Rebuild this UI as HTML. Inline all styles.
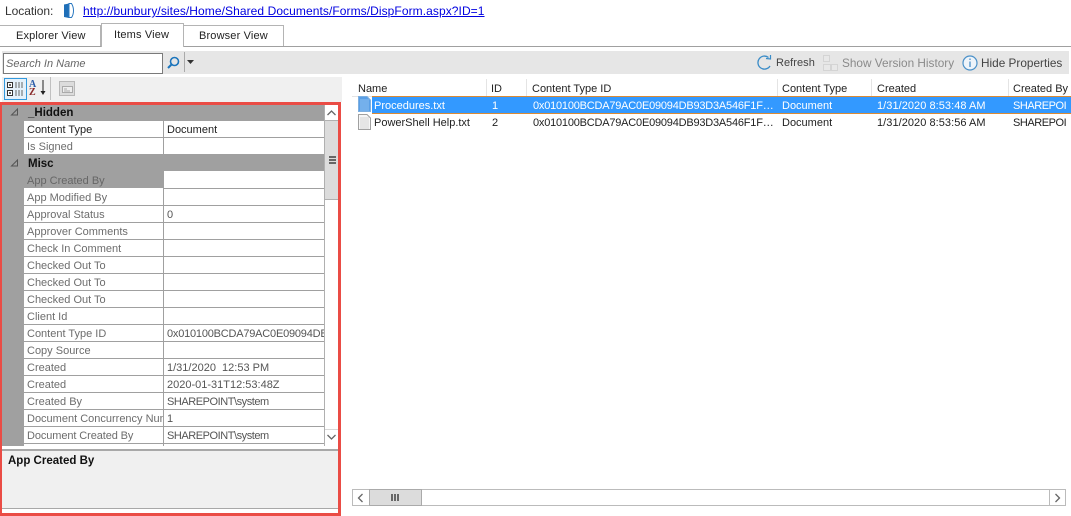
<!DOCTYPE html>
<html><head><meta charset="utf-8"><style>
html,body{margin:0;padding:0;background:#fff}
#p{position:relative;width:1071px;height:516px;overflow:hidden;background:#fff;font:11px/18px "Liberation Sans",sans-serif;color:#1a1a1a}
#p div{position:absolute;white-space:nowrap}
.n{left:27px;color:#6d6d6d;width:136px;overflow:hidden}
.v{left:167px;color:#555;width:157px;overflow:hidden}
.l{left:24px;width:300px;height:1px;background:#a0a0a0}
.h{left:352px;color:#222}
.c{color:#222}
.s{color:#fff}
.id{letter-spacing:-.21px}
.sp{letter-spacing:-.45px}
.tab{color:#222;letter-spacing:.15px}
</style></head><body><div id="p">
<div style="left:5px;top:2px;color:#333;font-size:12px;letter-spacing:-.05px">Location:</div>
<svg style="position:absolute;left:63px;top:2px" width="12" height="17"><path d="M1 2.500L6 1.500V16L1 15Z" fill="#1f6fb8"/><path d="M6 1.500H8.500C10 4 10.500 6 10.500 8.500C10.500 11 10 13.500 8.500 15.500H6Z" fill="#fff" stroke="#2a78c0"/></svg>
<div style="left:83px;top:2px;color:#0000e0;text-decoration:underline;font-size:12px;letter-spacing:.075px">http://bunbury/sites/Home/Shared Documents/Forms/DispForm.aspx?ID=1</div>

<div style="left:0;top:46px;width:1071px;height:1px;background:#a0a0a0"></div>
<div style="left:0;top:25px;width:101px;height:21px;border:1px solid #b4b4b4;border-left:0;border-bottom:0;box-sizing:border-box"></div>
<div class="tab" style="left:16px;top:27px">Explorer View</div>
<div style="left:101px;top:23px;width:83px;height:24px;border:1px solid #b4b4b4;border-bottom:0;box-sizing:border-box;background:#fff"></div>
<div class="tab" style="left:114px;top:26px">Items View</div>
<div style="left:184px;top:25px;width:100px;height:21px;border:1px solid #b4b4b4;border-left:0;border-bottom:0;box-sizing:border-box"></div>
<div class="tab" style="left:199px;top:27px">Browser View</div>

<div style="left:2px;top:51px;width:1067px;height:23px;background:#e6e6e6"></div>
<div style="left:3px;top:53px;width:160px;height:21px;border:1px solid #7a7a7a;box-sizing:border-box;background:#fff"></div>
<div style="left:6px;top:55px;color:#666;font-style:italic">Search In Name</div>
<svg style="position:absolute;left:166px;top:56px" width="16" height="14"><circle cx="8.500" cy="5.500" r="4" fill="none" stroke="#1c75bc" stroke-width="1.600"/><path d="M5.500 8.500L2 12" stroke="#1c75bc" stroke-width="2"/></svg>
<div style="left:184px;top:52px;width:1px;height:20px;background:#aaa"></div>
<svg style="position:absolute;left:186px;top:60px" width="9" height="5"><path d="M1 0H8L4.500 4Z" fill="#333"/></svg>

<svg style="position:absolute;left:756px;top:54px" width="17" height="17"><path d="M14 12A6.500 6.500 0 1 1 12.500 3.500" fill="none" stroke="#3a8cc8" stroke-width="1.300"/><path d="M10 4.500L14.500 5L14.500 1" fill="none" stroke="#3a8cc8" stroke-width="1.200"/></svg>
<div style="left:776px;top:54px;color:#444;font-size:11px;letter-spacing:.05px">Refresh</div>
<svg style="position:absolute;left:822px;top:54px" width="18" height="18"><g fill="#e8e8e8" stroke="#d4d4d4"><rect x="1.500" y="1.500" width="6" height="6"/><rect x="1.500" y="10.500" width="7" height="6"/><rect x="9.500" y="10.500" width="6" height="6"/></g></svg>
<div style="left:842px;top:54px;color:#8a8a8a;font-size:11.800px">Show Version History</div>
<svg style="position:absolute;left:962px;top:55px" width="16" height="16"><circle cx="8" cy="8" r="7" fill="#eef4fa" stroke="#4a90c8" stroke-width="1.200"/><path d="M8 6.500V12M8 3.500V5" stroke="#4a90c8" stroke-width="1.300"/></svg>
<div style="left:981px;top:54px;color:#444;font-size:11.800px">Hide Properties</div>

<div style="left:2px;top:77px;width:340px;height:25px;background:#f0f0f0"></div>
<div style="left:4px;top:78px;width:23px;height:22px;border:1px solid #3399dd;box-sizing:border-box;background:#e4f1fb"></div>
<svg style="position:absolute;left:6px;top:80px" width="18" height="18"><g fill="#fff" stroke="#333"><rect x="1.500" y="2.500" width="5" height="5"/><rect x="1.500" y="10.500" width="5" height="5"/></g><path d="M3 5H5M4 4V6M3 13H5M4 12V14" stroke="#333"/><path d="M9 3H17M9 5H17M9 7H17M9 11H17M9 13H17M9 15H17" stroke="#666" stroke-dasharray="2 1"/></svg>
<div style="left:29px;top:80px;font:bold 10px/9px 'Liberation Serif',serif;color:#2a5ca8">A</div>
<div style="left:29px;top:88px;font:bold 10px/9px 'Liberation Serif',serif;color:#8a2b2b">Z</div>
<svg style="position:absolute;left:40px;top:79px" width="7" height="18"><path d="M3 1V13" stroke="#222"/><path d="M0.500 12H5.500L3 16Z" fill="#222"/></svg>
<div style="left:50px;top:77px;width:1px;height:23px;background:#c0c0c0"></div>
<svg style="position:absolute;left:59px;top:81px" width="16" height="15"><rect x=".5" y=".5" width="15" height="14" fill="#dcdcdc" stroke="#b8b8b8"/><rect x="3.500" y="5.500" width="10" height="6" fill="#eee" stroke="#aaa"/><path d="M5 8H8M5 10H11" stroke="#aaa"/></svg>

<div style="left:2px;top:105px;width:336px;height:341px;background:#fff"></div>
<div style="left:2px;top:105px;width:22px;height:341px;background:#a0a0a0"></div>
<div style="left:2px;top:105px;width:322px;height:16px;background:#a0a0a0"></div>
<div style="left:2px;top:154px;width:322px;height:17px;background:#a0a0a0"></div>
<div style="left:24px;top:171px;width:140px;height:17px;background:#a0a0a0"></div>
<div style="left:163px;top:121px;width:1px;height:33px;background:#a0a0a0"></div>
<div style="left:163px;top:171px;width:1px;height:275px;background:#a0a0a0"></div>
<div class="l" style="top:137px"></div>
<div class="l" style="top:205px"></div><div class="l" style="top:222px"></div><div class="l" style="top:239px"></div><div class="l" style="top:256px"></div><div class="l" style="top:273px"></div><div class="l" style="top:290px"></div><div class="l" style="top:307px"></div><div class="l" style="top:324px"></div><div class="l" style="top:341px"></div><div class="l" style="top:358px"></div><div class="l" style="top:375px"></div><div class="l" style="top:392px"></div><div class="l" style="top:409px"></div><div class="l" style="top:426px"></div><div class="l" style="top:443px"></div>
<div class="l" style="top:188px;left:164px;width:160px"></div>

<svg style="position:absolute;left:10px;top:107px" width="10" height="10"><path d="M7.500 2V8H1.500Z" fill="none" stroke="#555"/></svg>
<svg style="position:absolute;left:10px;top:158px" width="10" height="10"><path d="M7.500 2V8H1.500Z" fill="none" stroke="#555"/></svg>
<div style="left:28px;top:104px;font-weight:bold;color:#111;font-size:11.500px">_Hidden</div>
<div style="left:28px;top:155px;font-weight:bold;color:#111;font-size:11.500px">Misc</div>

<div class="n" style="top:121px;height:16px;color:#222">Content Type</div><div class="v" style="top:121px;height:16px;color:#222">Document</div>
<div class="n" style="top:138px;height:16px">Is Signed</div>
<div class="n" style="top:172px;height:16px;color:#666">App Created By</div>
<div class="n" style="top:189px;height:16px">App Modified By</div>
<div class="n" style="top:206px;height:16px">Approval Status</div><div class="v" style="top:206px;height:16px">0</div>
<div class="n" style="top:223px;height:16px">Approver Comments</div>
<div class="n" style="top:240px;height:16px">Check In Comment</div>
<div class="n" style="top:257px;height:16px">Checked Out To</div>
<div class="n" style="top:274px;height:16px">Checked Out To</div>
<div class="n" style="top:291px;height:16px">Checked Out To</div>
<div class="n" style="top:308px;height:16px">Client Id</div>
<div class="n" style="top:325px;height:16px">Content Type ID</div><div class="v id" style="top:325px;height:16px">0x010100BCDA79AC0E09094DB93D3A</div>
<div class="n" style="top:342px;height:16px">Copy Source</div>
<div class="n" style="top:359px;height:16px">Created</div><div class="v" style="top:359px;height:16px">1/31/2020&nbsp; 12:53 PM</div>
<div class="n" style="top:376px;height:16px">Created</div><div class="v" style="top:376px;height:16px">2020-01-31T12:53:48Z</div>
<div class="n" style="top:393px;height:16px">Created By</div><div class="v sp" style="top:393px;height:16px">SHAREPOINT\system</div>
<div class="n" style="top:410px;height:16px">Document Concurrency Number</div><div class="v" style="top:410px;height:16px">1</div>
<div class="n" style="top:427px;height:16px;letter-spacing:-.1px">Document Created By</div><div class="v sp" style="top:427px;height:16px">SHAREPOINT\system</div>

<div style="left:324px;top:105px;width:1px;height:341px;background:#b0b0b0"></div>
<div style="left:325px;top:120px;width:13px;height:80px;background:#dcdcdc;border-top:1px solid #b0b0b0;border-bottom:1px solid #b0b0b0;box-sizing:border-box"></div>
<svg style="position:absolute;left:325px;top:107px" width="13" height="12"><path d="M2.500 8L6.500 4L10.500 8" fill="none" stroke="#666" stroke-width="1.300"/></svg>
<div style="left:329px;top:156px;width:7px;height:1.500px;background:#666"></div><div style="left:329px;top:159px;width:7px;height:1.500px;background:#666"></div><div style="left:329px;top:162px;width:7px;height:1.500px;background:#666"></div>
<div style="left:325px;top:429px;width:13px;height:16px;border-top:1px solid #d8d8d8;box-sizing:border-box"></div>
<svg style="position:absolute;left:325px;top:431px" width="13" height="12"><path d="M2.500 4L6.500 8L10.500 4" fill="none" stroke="#666" stroke-width="1.300"/></svg>

<div style="left:2px;top:449px;width:336px;height:60px;background:#f0f0f0;border-top:2px solid #a8a8a8;border-bottom:1px solid #a8a8a8;box-sizing:border-box"></div>
<div style="left:8px;top:452px;font-weight:bold;color:#111;font-size:11.500px">App Created By</div>

<div style="left:0;top:102px;width:341px;height:3px;background:#ea4c45"></div>
<div style="left:0;top:102px;width:2px;height:414px;background:#ea4c45"></div>
<div style="left:338px;top:102px;width:3px;height:414px;background:#ea4c45"></div>
<div style="left:0;top:513px;width:341px;height:3px;background:#ea4c45"></div>

<div style="left:486px;top:79px;width:1px;height:17px;background:#e4e4e4"></div>
<div style="left:526px;top:79px;width:1px;height:17px;background:#e4e4e4"></div>
<div style="left:777px;top:79px;width:1px;height:17px;background:#e4e4e4"></div>
<div style="left:871px;top:79px;width:1px;height:17px;background:#e4e4e4"></div>
<div style="left:1008px;top:79px;width:1px;height:17px;background:#e4e4e4"></div>
<div style="left:352px;top:96px;width:719px;height:1px;background:#e4e4e4"></div>
<div class="h" style="left:358px;top:80px">Name</div>
<div class="h" style="left:491px;top:80px">ID</div>
<div class="h" style="left:532px;top:80px">Content Type ID</div>
<div class="h" style="left:782px;top:80px">Content Type</div>
<div class="h" style="left:877px;top:80px">Created</div>
<div class="h" style="left:1013px;top:80px">Created By</div>

<div style="left:372px;top:96px;width:699px;height:18px;background:#3399ff;border-top:1px solid #d98a35;border-bottom:1px solid #d98a35;box-sizing:border-box"></div>
<svg style="position:absolute;left:358px;top:96px" width="14" height="17"><path d="M.5 .5H9L12.500 4V15.500H.5Z" fill="#5a9fe6" stroke="#7fb0e0"/><path d="M2 4H11M2 6H11M2 8H11M2 10H11M2 12H11M2 14H11" stroke="#8fc0f2"/></svg>
<svg style="position:absolute;left:358px;top:114px" width="14" height="17"><path d="M.5 .5H9L12.500 4V15.500H.5Z" fill="#f6f6f6" stroke="#a0a0a0"/><path d="M2 4H11M2 6H11M2 8H11M2 10H11M2 12H11M2 14H11" stroke="#d4d4d4"/></svg>
<div class="s" style="left:374px;top:97px">Procedures.txt</div>
<div class="s" style="left:492px;top:97px">1</div>
<div class="s id" style="left:533px;top:97px">0x010100BCDA79AC0E09094DB93D3A546F1F…</div>
<div class="s" style="left:782px;top:97px">Document</div>
<div class="s" style="left:877px;top:97px;letter-spacing:.05px">1/31/2020 8:53:48 AM</div>
<div class="s sp" style="left:1013px;top:97px;width:54px;height:16px;overflow:hidden">SHAREPOINT</div>
<div class="c" style="left:374px;top:114px">PowerShell Help.txt</div>
<div class="c" style="left:492px;top:114px">2</div>
<div class="c id" style="left:533px;top:114px">0x010100BCDA79AC0E09094DB93D3A546F1F…</div>
<div class="c" style="left:782px;top:114px">Document</div>
<div class="c" style="left:877px;top:114px;letter-spacing:.05px">1/31/2020 8:53:56 AM</div>
<div class="c sp" style="left:1013px;top:114px;width:54px;height:16px;overflow:hidden">SHAREPOINT</div>

<div style="left:352px;top:489px;width:714px;height:17px;border:1px solid #bbb;box-sizing:border-box;background:#fff"></div>
<div style="left:369px;top:489px;width:53px;height:17px;background:#dcdcdc;border:1px solid #aaa;box-sizing:border-box"></div>
<div style="left:391px;top:494px;width:2px;height:7px;background:#666"></div><div style="left:394px;top:494px;width:2px;height:7px;background:#666"></div><div style="left:397px;top:494px;width:2px;height:7px;background:#666"></div>
<svg style="position:absolute;left:355px;top:492px" width="11" height="12"><path d="M7.500 2L3.500 6L7.500 10" fill="none" stroke="#666" stroke-width="1.300"/></svg>
<div style="left:1049px;top:489px;width:1px;height:17px;background:#bbb"></div>
<svg style="position:absolute;left:1052px;top:492px" width="11" height="12"><path d="M3.500 2L7.500 6L3.500 10" fill="none" stroke="#666" stroke-width="1.300"/></svg>
</div></body></html>
